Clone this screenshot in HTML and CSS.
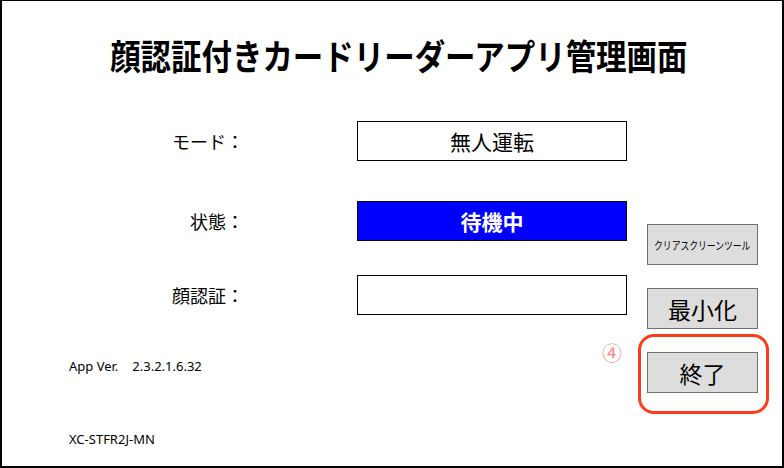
FILE: index.html
```html
<!DOCTYPE html>
<html lang="ja">
<head>
<meta charset="utf-8">
<title>顔認証付きカードリーダーアプリ管理画面</title>
<link rel="stylesheet" href="styles.css">
</head>
<body>
<div class="window">
  <h1 class="title"><span class="title-text">顔認証付きカードリーダーアプリ管理画面</span></h1>
  <div class="main">
    <div class="left">
      <div class="form">
        <div class="row">
          <div class="label">モード：</div>
          <div class="field">無人運転</div>
        </div>
        <div class="row row2">
          <div class="label">状態：</div>
          <div class="field status">待機中</div>
        </div>
        <div class="row row3">
          <div class="label">顔認証：</div>
          <div class="field"></div>
        </div>
      </div>
      <div class="footer">
        <div class="ver">App Ver.<span class="ver-num">2.3.2.1.6.32</span></div>
        <div class="model">XC-STFR2J-MN</div>
      </div>
    </div>
    <div class="side">
      <button class="btn btn-small"><span class="squeeze">クリアスクリーンツール</span></button>
      <button class="btn">最小化</button>
      <button class="btn">終了</button>
    </div>
  </div>
  <div class="mark">④</div>
  <div class="ring"></div>
</div>
</body>
</html>
```
FILE: styles.css
```css
* { box-sizing: border-box; }
html, body { margin: 0; padding: 0; background: #fff; }
body {
  font-family: "Noto Sans CJK JP", "Noto Sans", sans-serif;
  color: #000;
}
.window {
  position: relative;
  width: 784px;
  height: 468px;
  border-style: solid;
  border-color: #000;
  border-width: 1px 2px 2px 2px;
  background: #fff;
}
.title {
  margin: 36px 0 0 0;
  padding-left: 14px;
  text-align: center;
  font-size: 35px;
  line-height: 35px;
  font-weight: 700;
}
.title-text {
  display: inline-block;
  transform: scaleX(0.87);
  white-space: nowrap;
}
.main {
  display: flex;
  margin-top: 49px;
}
.left {
  display: flex;
  flex-direction: column;
}
.form {
  display: flex;
  flex-direction: column;
}
.row {
  display: grid;
  grid-template-columns: 242px 270px;
  column-gap: 113px;
  align-items: center;
}
.row2 { margin-top: 40px; }
.row3 { margin-top: 34px; }
.label {
  text-align: right;
  font-size: 18px;
  line-height: 24px;
}
.field {
  height: 40px;
  border: 1px solid #000;
  display: flex;
  align-items: center;
  justify-content: center;
  font-size: 21px;
}
.status {
  background: #0000ff;
  color: #fff;
  font-weight: 700;
}
.footer {
  padding-left: 67px;
  font-family: "Noto Sans", sans-serif;
  font-size: 13px;
  line-height: 18px;
}
.ver { margin-top: 42px; }
.ver-num { margin-left: 14px; }
.model { margin-top: 55px; }
.side {
  display: flex;
  flex-direction: column;
  gap: 23px;
  margin-left: 20px;
  padding-top: 103px;
}
.btn {
  width: 111px;
  height: 41px;
  background: #dddddd;
  border: 1px solid #707070;
  border-radius: 0;
  padding: 0;
  font-family: "Noto Sans CJK JP", sans-serif;
  font-size: 23px;
  color: #000;
  display: flex;
  align-items: center;
  justify-content: center;
}
.btn-small { font-size: 11px; }
.squeeze {
  display: inline-block;
  transform: scaleX(0.8);
  white-space: nowrap;
}
.mark {
  position: absolute;
  left: 600px;
  top: 342px;
  font-size: 20px;
  line-height: 20px;
  color: #ff8585;
}
.ring {
  position: absolute;
  left: 636px;
  top: 333px;
  width: 131px;
  height: 80px;
  border: 3px solid #ff3a1a;
  border-radius: 16px;
}
```
